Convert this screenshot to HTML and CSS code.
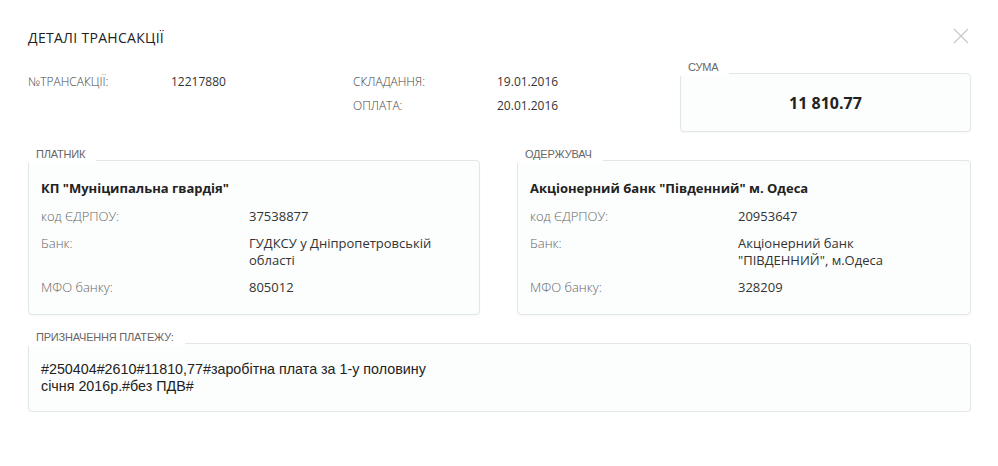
FILE: index.html
```html
<!DOCTYPE html>
<html lang="uk">
<head>
  <meta charset="UTF-8" />
  <meta name="viewport" content="width=device-width, initial-scale=1.0"/>
  <title>Деталі трансакції</title>
  <link rel="stylesheet" href="styles.css">
</head>
<body>
  <div class="modal">
    <div class="modal-head">
      <h2>ДЕТАЛІ ТРАНСАКЦІЇ</h2>
      <button class="close-btn" aria-label="Закрити">
        <svg width="16" height="16" viewBox="0 0 16 16">
          <path d="M1 1 L15 15 M15 1 L1 15" stroke="#cbcbcb" stroke-width="1.4" fill="none"/>
        </svg>
      </button>
    </div>

    <!-- Summary -->
    <div class="summary">
      <div class="info">
        <span class="info-label">№ТРАНСАКЦІЇ:</span>
        <span class="info-value">12217880</span>
        <span class="info-label">СКЛАДАННЯ:</span>
        <span class="info-value">19.01.2016</span>
        <span></span>
        <span></span>
        <span class="info-label">ОПЛАТА:</span>
        <span class="info-value">20.01.2016</span>
      </div>
      <div class="box sum-box">
        <span class="box-label">СУМА</span>
        <div class="amount">11 810.77</div>
      </div>
    </div>

    <!-- Payer / receiver -->
    <div class="parties">
      <div class="box party">
        <span class="box-label">ПЛАТНИК</span>
        <div class="party-name">КП "Муніципальна гвардія"</div>
        <div class="row"><span class="row-label">код ЄДРПОУ:</span><span class="row-value">37538877</span></div>
        <div class="row"><span class="row-label">Банк:</span><span class="row-value">ГУДКСУ у Дніпропетровській області</span></div>
        <div class="row"><span class="row-label">МФО банку:</span><span class="row-value">805012</span></div>
      </div>
      <div class="box party">
        <span class="box-label">ОДЕРЖУВАЧ</span>
        <div class="party-name">Акціонерний банк "Південний" м. Одеса</div>
        <div class="row"><span class="row-label">код ЄДРПОУ:</span><span class="row-value">20953647</span></div>
        <div class="row"><span class="row-label">Банк:</span><span class="row-value">Акціонерний банк "ПІВДЕННИЙ", м.Одеса</span></div>
        <div class="row"><span class="row-label">МФО банку:</span><span class="row-value">328209</span></div>
      </div>
    </div>

    <!-- Purpose -->
    <div class="box purpose">
      <span class="box-label">ПРИЗНАЧЕННЯ ПЛАТЕЖУ:</span>
      <p>#250404#2610#11810,77#заробітна плата за 1-у половину сiчня 2016р.#без ПДВ#</p>
    </div>
  </div>
</body>
</html>
```

FILE: styles.css
```css
* {
  box-sizing: border-box;
  margin: 0;
  padding: 0;
}

body {
  background: #fff;
  color: #333;
  font-family: 'Open Sans', sans-serif;
}

.modal {
  width: 998px;
  padding: 28px 27px 0 28px;
}

.modal-head {
  display: flex;
  justify-content: space-between;
  align-items: flex-start;
}

h2 {
  font-size: 14px;
  font-weight: 400;
  line-height: 20px;
  letter-spacing: 0.3px;
  color: #222;
}

.close-btn {
  background: none;
  border: none;
  width: 16px;
  height: 16px;
  margin-right: 2px;
  cursor: pointer;
}

.close-btn svg {
  display: block;
}

.summary {
  display: flex;
  justify-content: space-between;
  align-items: flex-start;
  margin-top: 22px;
}

.info {
  display: grid;
  grid-template-columns: 143px 182px 144px auto;
  line-height: 24px;
  font-size: 12px;
}

.info-label {
  font-weight: 300;
  color: #444;
}

.info-value {
  color: #333;
}

.box {
  position: relative;
  background: #fcfdfd;
  border: 1px solid #e1e7e9;
  border-radius: 4px;
  box-shadow: 0 1px 2px rgba(0,0,0,0.03);
}

.box-label {
  position: absolute;
  top: -15px;
  left: -3px;
  height: 17px;
  line-height: 17px;
  padding: 0 11px 0 10px;
  background: #fff;
  font-family: 'Liberation Sans', Arial, sans-serif;
  font-size: 11px;
  letter-spacing: -0.2px;
  color: #666;
}

.sum-box {
  width: 291px;
  height: 59px;
  margin-top: 3px;
  display: flex;
  align-items: center;
  justify-content: center;
}

.amount {
  font-size: 16px;
  font-weight: 700;
  color: #222;
}

.parties {
  display: grid;
  grid-template-columns: 452px 1fr;
  column-gap: 37px;
  margin-top: 28px;
}

.party {
  padding: 17px 12px 18px 12px;
  font-size: 13px;
}

.party-name {
  font-weight: 700;
  line-height: 20px;
  color: #222;
  margin-bottom: 10px;
}

.row {
  display: flex;
  line-height: 17px;
  margin-bottom: 10px;
}

.row:last-child {
  margin-bottom: 0;
}

.row-label {
  width: 208px;
  flex-shrink: 0;
  font-weight: 300;
  color: #666;
}

.row-value {
  width: 196px;
  color: #333;
}

.purpose {
  margin-top: 28px;
  padding: 17px 12px 16px 12px;
}

.purpose p {
  max-width: 400px;
  font-family: 'Liberation Sans', Arial, sans-serif;
  font-size: 14.3px;
  line-height: 17px;
  color: #222;
}
```
